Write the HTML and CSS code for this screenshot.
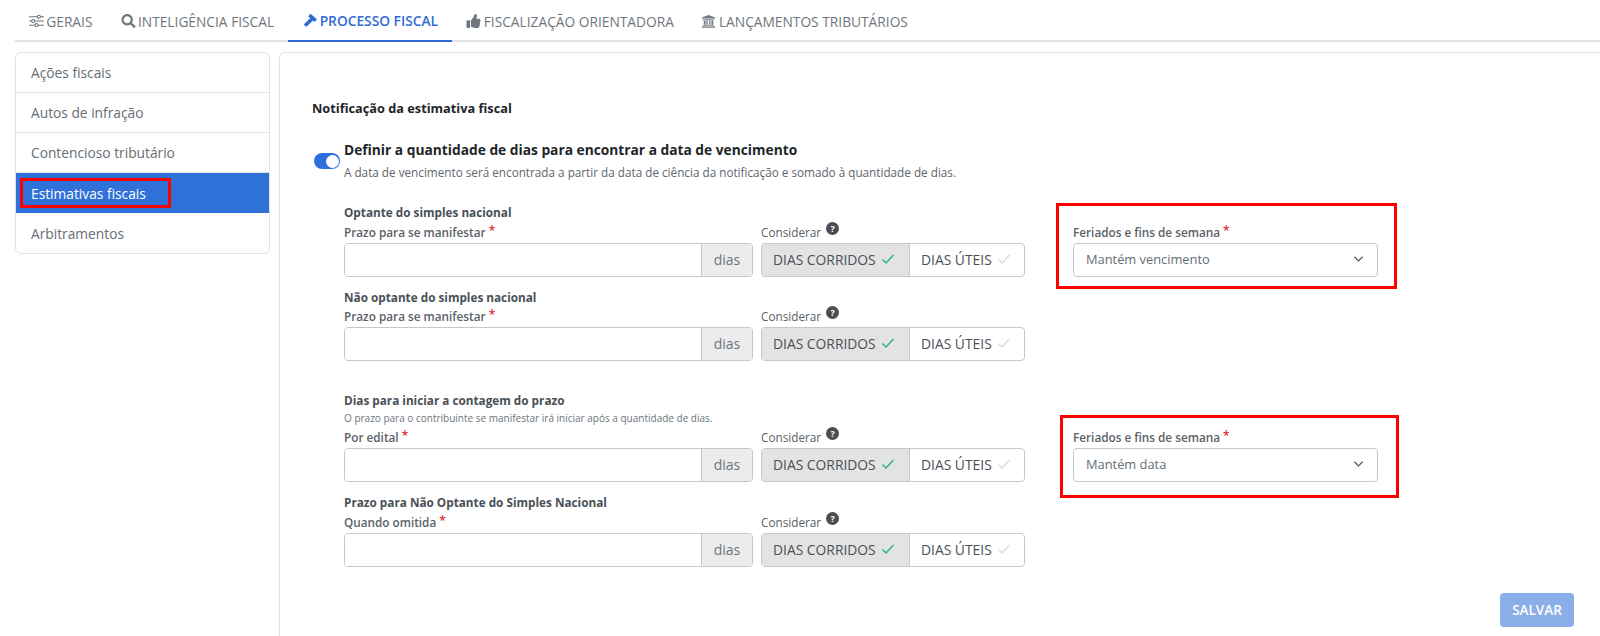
FILE: index.html
```html
<!DOCTYPE html>
<html lang="pt-BR">
<head>
<meta charset="utf-8">
<title>Processo fiscal</title>
<link rel="stylesheet" href="styles.css">
</head>
<body>
<svg class="defs" width="0" height="0" aria-hidden="true">
  <symbol id="chk" viewBox="0 0 14 12"><path d="M1.5 6.5 5 10 12.5 2" fill="none" stroke="currentColor" stroke-width="1.5"/></symbol>
  <symbol id="chev" viewBox="0 0 12 8"><path d="M1.5 1.5 6 6l4.5-4.5" fill="none" stroke="currentColor" stroke-width="1.3"/></symbol>
</svg>
<nav class="tabs">
  <a class="tab"><svg class="ico" viewBox="0 0 16 14"><path d="M0 2.5h16M0 7h16M0 11.5h16" stroke="currentColor" stroke-width="1.2" fill="none"/><circle cx="10.5" cy="2.5" r="1.7" fill="#fff" stroke="currentColor" stroke-width="1.1"/><circle cx="4.5" cy="7" r="1.7" fill="#fff" stroke="currentColor" stroke-width="1.1"/><circle cx="8" cy="11.5" r="1.7" fill="#fff" stroke="currentColor" stroke-width="1.1"/></svg>GERAIS</a>
  <a class="tab"><svg class="ico" viewBox="0 0 512 512"><path fill="currentColor" d="M505 442.7L405.3 343c-4.5-4.5-10.6-7-17-7H372c27.6-35.3 44-79.7 44-128C416 93.1 322.9 0 208 0S0 93.1 0 208s93.1 208 208 208c48.3 0 92.7-16.4 128-44v16.3c0 6.4 2.5 12.5 7 17l99.7 99.7c9.4 9.4 24.6 9.4 33.9 0l28.3-28.3c9.4-9.4 9.4-24.6.1-34zM208 336c-70.7 0-128-57.2-128-128 0-70.7 57.2-128 128-128 70.7 0 128 57.2 128 128 0 70.7-57.2 128-128 128z"/></svg>INTELIGÊNCIA FISCAL</a>
  <a class="tab active"><svg class="ico" viewBox="0 0 16 16"><path fill="currentColor" d="M8 .8 15.4 7.2 12.6 10.2 10.8 8.7 4 15.2c-.6.5-1.5.4-2-.1l-1-1c-.5-.5-.5-1.3 0-1.8L7.7 6 5.4 3.8z"/></svg>PROCESSO FISCAL</a>
  <a class="tab wide"><svg class="ico" viewBox="0 0 512 512"><path fill="currentColor" d="M104 224H24c-13.255 0-24 10.745-24 24v240c0 13.255 10.745 24 24 24h80c13.255 0 24-10.745 24-24V248c0-13.255-10.745-24-24-24zM384 81.452c0 42.416-25.97 66.208-33.277 94.548h101.723c33.397 0 59.397 27.746 59.553 58.098.084 17.938-7.546 37.249-19.439 49.197l-.11.11c9.836 23.337 8.237 56.037-9.308 79.469 8.681 25.895-.069 57.704-16.382 74.757 4.298 17.598 2.244 32.575-6.148 44.632C440.202 511.587 389.616 512 346.839 512l-2.845-.001c-48.287-.017-87.806-17.598-119.56-31.725-15.957-7.099-36.821-15.887-52.651-16.178-6.54-.12-11.783-5.457-11.783-11.998v-213.77c0-3.2 1.282-6.271 3.558-8.521 39.614-39.144 56.648-80.587 89.117-113.111 14.804-14.832 20.188-37.236 25.393-58.902C282.515 39.293 291.817 0 312 0c24 0 72 8 72 81.452z"/></svg>FISCALIZAÇÃO ORIENTADORA</a>
  <a class="tab wide"><svg class="ico" viewBox="0 0 16 16"><path fill="currentColor" d="M8 1 15.5 4v1.2h-15V4zM1.5 6h13v1h-13zM2.6 7.6h2v4.6h-2zM5.6 7.6h1.6v4.6H5.6zM8.8 7.6h1.6v4.6H8.8zM11.4 7.6h2v4.6h-2zM1.5 12.8h13v1h-13zM.5 14.4h15V15.6H.5z"/></svg>LANÇAMENTOS TRIBUTÁRIOS</a>
</nav>
<div class="page">
  <aside class="side">
    <a class="side-item">Ações fiscais</a>
    <a class="side-item">Autos de infração</a>
    <a class="side-item">Contencioso tributário</a>
    <a class="side-item current"><span class="mark">Estimativas fiscais</span></a>
    <a class="side-item">Arbitramentos</a>
  </aside>
  <main class="panel">
    <h2 class="panel-title">Notificação da estimativa fiscal</h2>
    <div class="switch-row">
      <span class="switch"><span class="knob"></span></span>
      <div>
        <div class="switch-title">Definir a quantidade de dias para encontrar a data de vencimento</div>
        <div class="switch-sub">A data de vencimento será encontrada a partir da data de ciência da notificação e somado à quantidade de dias.</div>
      </div>
    </div>

    <section class="block first">
      <h3 class="block-title">Optante do simples nacional</h3>
      <div class="fields">
        <div class="field f-input">
          <label class="lbl">Prazo para se manifestar <i class="req">*</i></label>
          <div class="input-group"><span class="input"></span><span class="addon">dias</span></div>
        </div>
        <div class="field f-days">
          <label class="lbl lbl-r">Considerar <b class="help">?</b></label>
          <div class="days"><span class="day on">DIAS CORRIDOS <svg class="chk"><use href="#chk"/></svg></span><span class="day">DIAS ÚTEIS <svg class="chk off"><use href="#chk"/></svg></span></div>
        </div>
        <div class="field f-select">
          <label class="lbl">Feriados e fins de semana <i class="req">*</i></label>
          <div class="select">Mantém vencimento<svg class="chev"><use href="#chev"/></svg></div>
          <span class="note note-a"></span>
        </div>
      </div>
    </section>

    <section class="block second">
      <h3 class="block-title">Não optante do simples nacional</h3>
      <div class="fields">
        <div class="field f-input">
          <label class="lbl">Prazo para se manifestar <i class="req">*</i></label>
          <div class="input-group"><span class="input"></span><span class="addon">dias</span></div>
        </div>
        <div class="field f-days">
          <label class="lbl lbl-r">Considerar <b class="help">?</b></label>
          <div class="days"><span class="day on">DIAS CORRIDOS <svg class="chk"><use href="#chk"/></svg></span><span class="day">DIAS ÚTEIS <svg class="chk off"><use href="#chk"/></svg></span></div>
        </div>
      </div>
    </section>

    <section class="block third">
      <h3 class="block-title">Dias para iniciar a contagem do prazo</h3>
      <p class="hint">O prazo para o contribuinte se manifestar irá iniciar após a quantidade de dias.</p>
      <div class="fields">
        <div class="field f-input">
          <label class="lbl">Por edital <i class="req">*</i></label>
          <div class="input-group"><span class="input"></span><span class="addon">dias</span></div>
        </div>
        <div class="field f-days">
          <label class="lbl lbl-r">Considerar <b class="help">?</b></label>
          <div class="days"><span class="day on">DIAS CORRIDOS <svg class="chk"><use href="#chk"/></svg></span><span class="day">DIAS ÚTEIS <svg class="chk off"><use href="#chk"/></svg></span></div>
        </div>
        <div class="field f-select">
          <label class="lbl">Feriados e fins de semana <i class="req">*</i></label>
          <div class="select">Mantém data<svg class="chev"><use href="#chev"/></svg></div>
          <span class="note note-b"></span>
        </div>
      </div>
    </section>

    <section class="block fourth">
      <h3 class="block-title">Prazo para Não Optante do Simples Nacional</h3>
      <div class="fields">
        <div class="field f-input">
          <label class="lbl">Quando omitida <i class="req">*</i></label>
          <div class="input-group"><span class="input"></span><span class="addon">dias</span></div>
        </div>
        <div class="field f-days">
          <label class="lbl lbl-r">Considerar <b class="help">?</b></label>
          <div class="days"><span class="day on">DIAS CORRIDOS <svg class="chk"><use href="#chk"/></svg></span><span class="day">DIAS ÚTEIS <svg class="chk off"><use href="#chk"/></svg></span></div>
        </div>
      </div>
    </section>

    <div class="actions"><button class="save" type="button">SALVAR</button></div>
  </main>
</div>
</body>
</html>
```
FILE: styles.css
```css
* { box-sizing: border-box; }
html, body { margin: 0; padding: 0; height: 636px; overflow: hidden; background: #fff; }
body { font-family: "Open Sans", "Noto Sans", sans-serif; color: #495057; font-size: 14px; }
.defs { position: absolute; }

.tabs { display: flex; height: 42px; margin-left: 15px; border-bottom: 2px solid #e3e3e3; }
.tab { display: flex; align-items: center; gap: 2px; height: 42px; padding: 0 14.25px; font-size: 13.75px; color: #6f767d; }
.tab.wide { gap: 3px; padding: 0 13.5px; }
.tab.active { color: #2f6bd4; font-weight: 600; border-bottom: 2px solid #2f6bd4; }
.ico { width: 15px; height: 14px; flex: none; }

.page { display: flex; gap: 9px; margin: 10px 0 0 15px; height: 584px; }
.side { width: 255px; height: 202px; flex: none; border: 1px solid #e3e3e3; border-radius: 6px; overflow: hidden; }
.side-item { display: flex; align-items: center; height: 40px; padding-left: 15px; color: #666d74; font-size: 13.75px; border-bottom: 1px solid #e3e3e3; }
.side-item:last-child { border-bottom: 0; }
.side-item.current { background: #3071d9; color: #fff; border-bottom: 0; }
.mark { position: relative; }
.mark::after { content: ""; position: absolute; left: -11px; right: -25px; top: -6px; bottom: -5px; border: 3px solid #f00; }

.panel { flex: 1; border: 1px solid #e3e3e3; border-right: 0; border-bottom: 0; border-top-left-radius: 6px; padding-left: 32px; }
.panel-title { margin: 45px 0 0; font-size: 12.75px; line-height: 20px; font-weight: 700; color: #212529; }
.switch-row { display: flex; gap: 4px; margin: 22px 0 0 2px; }
.switch { position: relative; width: 26px; height: 16px; margin-top: 13px; border-radius: 8px; background: #2f6fdc; flex: none; }
.knob { position: absolute; right: 1px; top: 1.5px; width: 13px; height: 13px; border-radius: 50%; background: #fff; }
.switch-title { font-size: 13.75px; line-height: 20px; font-weight: 700; color: #212529; }
.switch-sub { font-size: 11.72px; line-height: 20px; color: #5f666d; margin-top: 2px; }

.block { margin-left: 32px; }
.first { margin-top: 19px; }
.second { margin-top: 8px; }
.third { margin-top: 29px; }
.fourth { margin-top: 10px; }
.block-title { margin: 0; height: 20px; font-size: 11.75px; line-height: 20px; font-weight: 700; color: #495057; }
.first .block-title { padding-top: 2px; line-height: 18px; }
.second .block-title { padding-top: 4px; line-height: 16px; }
.hint { margin: 0; font-size: 10px; line-height: 17px; color: #6c757d; }
.fields { display: flex; }
.f-input { width: 409px; margin-right: 8px; }
.f-days { width: 264px; margin-right: 48px; }
.f-select { width: 305px; position: relative; }
.lbl { display: block; height: 22px; padding-top: 3px; font-size: 11.75px; line-height: 17px; font-weight: 600; color: #5a6168; white-space: nowrap; }
.lbl-r { font-weight: 400; }
.third .lbl, .fourth .lbl { height: 21px; padding-top: 2px; }
.req { font-style: normal; color: #e0242f; position: relative; top: -2px; }
.help { display: inline-flex; align-items: center; justify-content: center; width: 13px; height: 13px; border-radius: 50%; background: #4d4d4d; color: #fff; font-size: 9px; line-height: 13px; position: relative; top: -5px; margin-left: 2px; }

.input-group { display: flex; height: 34px; border: 1px solid #c4c8cc; border-radius: 4px; overflow: hidden; }
.input { flex: 1; background: #fff; }
.addon { width: 51px; display: flex; align-items: center; justify-content: center; background: #ececec; border-left: 1px solid #c4c8cc; color: #6c757d; font-size: 14px; padding-bottom: 2px; }

.days { display: flex; height: 34px; border: 1px solid #c4c8cc; border-radius: 4px; overflow: hidden; }
.day { display: flex; align-items: center; gap: 5px; padding: 0 0 2px 11px; font-size: 13.85px; color: #495057; flex: 1; }
.day.on { width: 148px; flex: none; background: #e3e3e3; border-right: 1px solid #c4c8cc; }
.chk { width: 14px; height: 12px; color: #2cb585; }
.chk.off { color: #dcdcdc; }

.select { display: flex; align-items: center; justify-content: space-between; height: 34px; padding: 0 13px 2px 12px; border: 1px solid #c4c8cc; border-radius: 4px; color: #666d74; font-size: 12.85px; }
.chev { width: 11px; height: 8px; color: #555; }

.note { position: absolute; border: 3px solid #f00; pointer-events: none; }
.note-a { left: -17px; right: -19px; top: -18px; bottom: -12px; }
.note-b { left: -13px; right: -21px; top: -12px; bottom: -16px; }

.actions { display: flex; justify-content: flex-end; margin: 26px 26px 0 0; }
.save { width: 74px; height: 34px; border: 0; border-radius: 4px; background: #8aaee8; color: #fff; font: 600 13.5px "Open Sans", "Noto Sans", sans-serif; }
```
